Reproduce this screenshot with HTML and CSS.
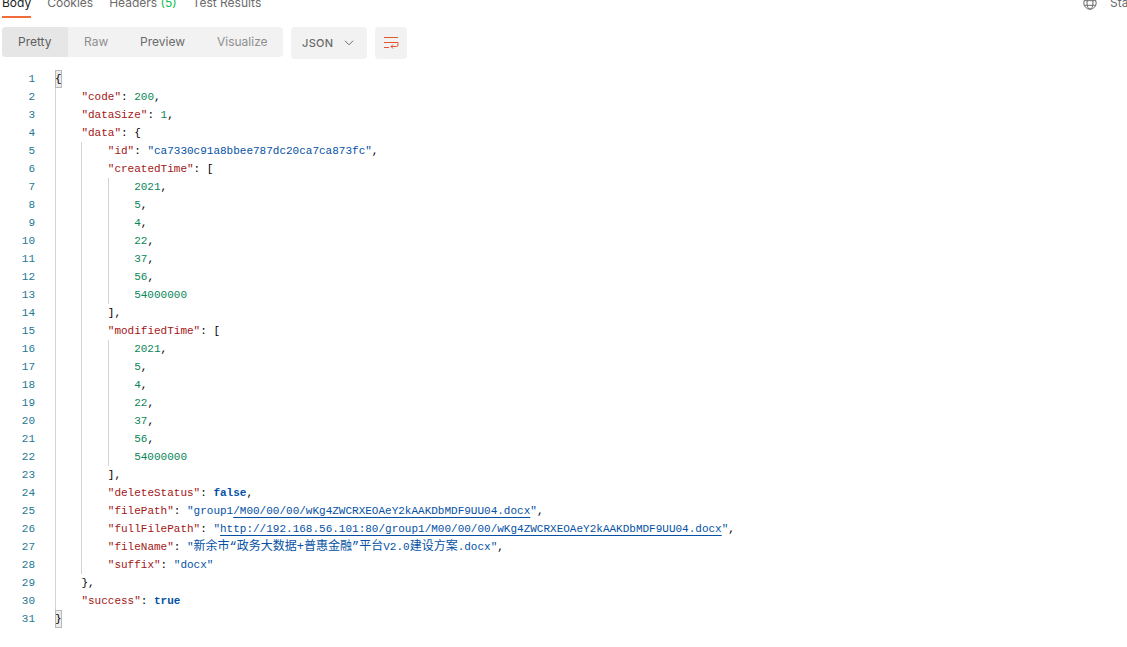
FILE: index.html
```html
<!DOCTYPE html>
<html lang="zh">
<head>
<meta charset="utf-8">
<title>Response</title>
<link rel="stylesheet" href="styles.css">
</head>
<body>
<div class="tabbar">
  <div class="tabs">
    <span class="tab active">Body</span>
    <span class="tab">Cookies</span>
    <span class="tab">Headers <em class="count">(5)</em></span>
    <span class="tab">Test Results</span>
  </div>
  <div class="status">
    <svg class="globe" width="14" height="14" viewBox="0 0 14 14" fill="none" stroke="#6b6b6b" stroke-width="1"><circle cx="7" cy="7" r="6.2"/><ellipse cx="7" cy="7" rx="3" ry="6.2"/><path d="M1.2 4.7h11.6M1.2 9.3h11.6"/></svg>
    <span class="status-text">Sta</span>
  </div>
</div>
<div class="toolbar">
  <div class="segments">
    <span class="seg seg-active">Pretty</span>
    <span class="seg seg-raw">Raw</span>
    <span class="seg seg-preview">Preview</span>
    <span class="seg seg-vis">Visualize</span>
  </div>
  <div class="select">JSON
    <svg width="10" height="6" viewBox="0 0 10 6" fill="none" stroke="#6b6b6b" stroke-width="1"><path d="M1 .8l4 4 4-4"/></svg>
  </div>
  <div class="wrap-btn">
    <svg width="16" height="14" viewBox="0 0 16 14" fill="none" stroke="#e4572e" stroke-width="1"><path d="M1 1.5h14M1 6.5h14v2.5a1.5 1.5 0 0 1-1.5 1.5H8M10 8.5l-2 2 2 2M1 11.5h5"/></svg>
  </div>
</div>
<div class="editor">
  <div class="line"><span class="num">1</span><span class="t"><span class="bracket">{</span></span></div>
  <div class="line"><span class="num">2</span><span class="i"></span><span class="t"><span class="k">"code"</span>: <span class="n">200</span>,</span></div>
  <div class="line"><span class="num">3</span><span class="i"></span><span class="t"><span class="k">"dataSize"</span>: <span class="n">1</span>,</span></div>
  <div class="line"><span class="num">4</span><span class="i"></span><span class="t"><span class="k">"data"</span>: {</span></div>
  <div class="line"><span class="num">5</span><span class="i"></span><span class="i"></span><span class="t"><span class="k">"id"</span>: <span class="s">"ca7330c91a8bbee787dc20ca7ca873fc"</span>,</span></div>
  <div class="line"><span class="num">6</span><span class="i"></span><span class="i"></span><span class="t"><span class="k">"createdTime"</span>: [</span></div>
  <div class="line"><span class="num">7</span><span class="i"></span><span class="i"></span><span class="i"></span><span class="t"><span class="n">2021</span>,</span></div>
  <div class="line"><span class="num">8</span><span class="i"></span><span class="i"></span><span class="i"></span><span class="t"><span class="n">5</span>,</span></div>
  <div class="line"><span class="num">9</span><span class="i"></span><span class="i"></span><span class="i"></span><span class="t"><span class="n">4</span>,</span></div>
  <div class="line"><span class="num">10</span><span class="i"></span><span class="i"></span><span class="i"></span><span class="t"><span class="n">22</span>,</span></div>
  <div class="line"><span class="num">11</span><span class="i"></span><span class="i"></span><span class="i"></span><span class="t"><span class="n">37</span>,</span></div>
  <div class="line"><span class="num">12</span><span class="i"></span><span class="i"></span><span class="i"></span><span class="t"><span class="n">56</span>,</span></div>
  <div class="line"><span class="num">13</span><span class="i"></span><span class="i"></span><span class="i"></span><span class="t"><span class="n">54000000</span></span></div>
  <div class="line"><span class="num">14</span><span class="i"></span><span class="i"></span><span class="t">],</span></div>
  <div class="line"><span class="num">15</span><span class="i"></span><span class="i"></span><span class="t"><span class="k">"modifiedTime"</span>: [</span></div>
  <div class="line"><span class="num">16</span><span class="i"></span><span class="i"></span><span class="i"></span><span class="t"><span class="n">2021</span>,</span></div>
  <div class="line"><span class="num">17</span><span class="i"></span><span class="i"></span><span class="i"></span><span class="t"><span class="n">5</span>,</span></div>
  <div class="line"><span class="num">18</span><span class="i"></span><span class="i"></span><span class="i"></span><span class="t"><span class="n">4</span>,</span></div>
  <div class="line"><span class="num">19</span><span class="i"></span><span class="i"></span><span class="i"></span><span class="t"><span class="n">22</span>,</span></div>
  <div class="line"><span class="num">20</span><span class="i"></span><span class="i"></span><span class="i"></span><span class="t"><span class="n">37</span>,</span></div>
  <div class="line"><span class="num">21</span><span class="i"></span><span class="i"></span><span class="i"></span><span class="t"><span class="n">56</span>,</span></div>
  <div class="line"><span class="num">22</span><span class="i"></span><span class="i"></span><span class="i"></span><span class="t"><span class="n">54000000</span></span></div>
  <div class="line"><span class="num">23</span><span class="i"></span><span class="i"></span><span class="t">],</span></div>
  <div class="line"><span class="num">24</span><span class="i"></span><span class="i"></span><span class="t"><span class="k">"deleteStatus"</span>: <span class="b">false</span>,</span></div>
  <div class="line"><span class="num">25</span><span class="i"></span><span class="i"></span><span class="t"><span class="k">"filePath"</span>: <span class="s">"group1<span class="u">/M00/00/00/wKg4ZWCRXEOAeY2kAAKDbMDF9UU04.docx</span>"</span>,</span></div>
  <div class="line"><span class="num">26</span><span class="i"></span><span class="i"></span><span class="t"><span class="k">"fullFilePath"</span>: <span class="s">"<span class="u">http://192.168.56.101:80/group1/M00/00/00/wKg4ZWCRXEOAeY2kAAKDbMDF9UU04.docx</span>"</span>,</span></div>
  <div class="line"><span class="num">27</span><span class="i"></span><span class="i"></span><span class="t"><span class="k">"fileName"</span>: <span class="s">"<span class="cjk">新余市“政务大数据+普惠金融”平台</span>V2.0<span class="cjk">建设方案</span>.docx"</span>,</span></div>
  <div class="line"><span class="num">28</span><span class="i"></span><span class="i"></span><span class="t"><span class="k">"suffix"</span>: <span class="s">"docx"</span></span></div>
  <div class="line"><span class="num">29</span><span class="i"></span><span class="t">},</span></div>
  <div class="line"><span class="num">30</span><span class="i"></span><span class="t"><span class="k">"success"</span>: <span class="b">true</span></span></div>
  <div class="line"><span class="num">31</span><span class="t"><span class="bracket">}</span></span></div>
</div>
</body>
</html>
```
FILE: styles.css
```css
* { box-sizing: border-box; }
html, body { margin: 0; padding: 0; background: #fff; overflow: hidden; }
body { width: 1127px; height: 647px; font-family: Inter, "Noto Sans", sans-serif; font-size: 12px; color: #6b6b6b; }

.tabbar { display: flex; justify-content: space-between; height: 18px; padding-left: 2px; }
.tabs { display: flex; gap: 16px; }
.tab { display: block; height: 18px; margin-top: -5px; line-height: 16px; white-space: pre; color: #6b6b6b; }
.tab.active { height: 23px; margin-top: -5px; color: #212121; border-bottom: 2px solid #f26b3a; }
.count { font-style: normal; color: #0cbb52; }
.status { display: flex; align-items: flex-end; gap: 13px; width: 44px; padding-bottom: 7px; }
.status-text { line-height: 16px; }
.globe { margin-bottom: 1px; flex: none; }

.toolbar { display: flex; align-items: flex-start; gap: 8px; margin-top: 9px; padding-left: 2px; }
.segments { display: flex; width: 281px; height: 30px; background: #f2f2f2; border-radius: 4px; overflow: hidden; line-height: 30px; }
.seg { display: block; color: #8f8f8f; }
.seg-active { width: 66px; padding-left: 16px; background: #e6e6e6; color: #5f5f5f; }
.seg-raw { width: 56px; padding-left: 16px; }
.seg-preview { width: 93px; padding-left: 16px; color: #6b6b6b; }
.seg-vis { padding-left: 0; }
.select { display: flex; align-items: center; justify-content: space-between; width: 76px; height: 32px; padding: 0 13px 0 11px; background: #f2f2f2; border-radius: 4px; color: #6b6b6b; font-weight: 500; font-size: 11px; letter-spacing: .3px; }
.wrap-btn { display: flex; align-items: center; justify-content: center; width: 32px; height: 32px; background: #f2f2f2; border-radius: 4px; }

.editor { margin-top: 11px; font-family: "Liberation Mono", "Noto Sans CJK SC", monospace; font-size: 11px; color: #000; }
.line { display: flex; height: 18px; line-height: 18px; }
.num { flex: none; width: 35px; margin-right: 20px; text-align: right; color: #237893; }
.i { flex: none; width: 26.4px; height: 18px; border-left: 1px solid #d3d3d3; }
.t { white-space: pre; }
.k { color: #a31515; }
.n { color: #098658; }
.s { color: #0451a5; }
.b { color: #0451a5; font-weight: 700; }
.u { text-decoration: underline; text-decoration-color: #0451a5; text-underline-offset: 3px; }
.cjk { font-size: 12px; line-height: 18px; }
.bracket { display: inline-block; width: 7px; height: 18px; background: #ececec; outline: 1px solid #b9b9b9; outline-offset: -1px; }
```
